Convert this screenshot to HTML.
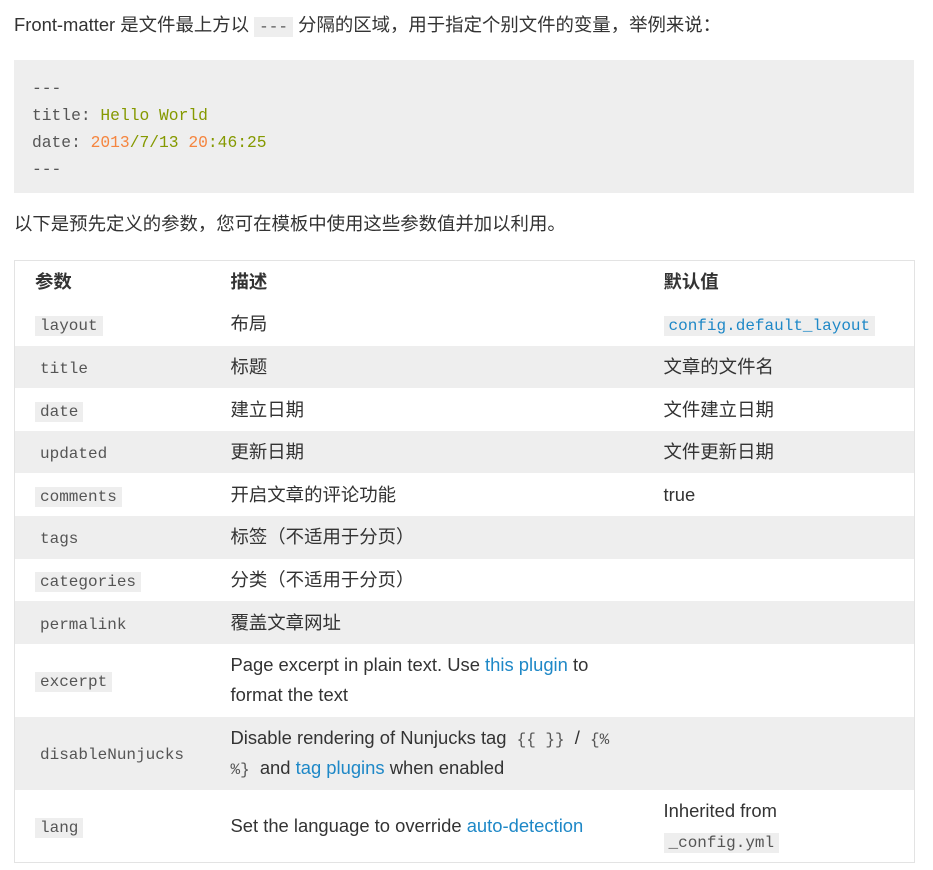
<!DOCTYPE html>
<html><head><meta charset="utf-8"><style>
body{margin:0;background:#fff;color:#333;font-family:"Liberation Sans","Noto Sans CJK SC",sans-serif;font-size:18.4px;}
.p{position:absolute;left:14px;margin:0;line-height:30px;white-space:nowrap;}
code{font-family:"Liberation Mono",monospace;font-size:16px;background:#eee;padding:1px 5px;color:#555;line-height:20px;}
pre{position:absolute;left:14px;top:60px;width:900px;height:133px;margin:0;background:#eee;box-sizing:border-box;padding:15px 18px;font-family:"Liberation Mono",monospace;font-size:16.3px;line-height:27px;color:#555;}
.g{color:#859900}.o{color:#f5853f}
table{position:absolute;left:14px;top:260px;width:900px;border-collapse:collapse;table-layout:fixed;border:1px solid #e3e3e3;}
td,th{text-align:left;padding:0 0 0 14px;line-height:30px;vertical-align:middle;}
td:first-child,th:first-child{padding-left:20px;}
tr{height:42.6px}
tr.t{height:73px}
th{font-weight:bold;}
tr:nth-child(odd) td{background:#eee;}
a{color:#1e88c7;text-decoration:none}
</style></head><body>
<p class="p" style="top:10px">Front-matter 是文件最上方以 <code>---</code> 分隔的区域，用于指定个别文件的变量，举例来说：</p>
<pre>---
title: <span class="g">Hello World</span>
date: <span class="o">2013</span><span class="g">/7/13</span> <span class="o">20</span><span class="g">:46:25</span>
---</pre>
<p class="p" style="top:209px">以下是预先定义的参数，您可在模板中使用这些参数值并加以利用。</p>
<table>
<colgroup><col style="width:202px"><col style="width:433px"><col style="width:265px"></colgroup>
<tr><th>参数</th><th>描述</th><th>默认值</th></tr>
<tr><td><code>layout</code></td><td>布局</td><td><code style="color:#1e88c7">config.default_layout</code></td></tr>
<tr><td><code>title</code></td><td>标题</td><td>文章的文件名</td></tr>
<tr><td><code>date</code></td><td>建立日期</td><td>文件建立日期</td></tr>
<tr><td><code>updated</code></td><td>更新日期</td><td>文件更新日期</td></tr>
<tr><td><code>comments</code></td><td>开启文章的评论功能</td><td>true</td></tr>
<tr><td><code>tags</code></td><td>标签（不适用于分页）</td><td></td></tr>
<tr><td><code>categories</code></td><td>分类（不适用于分页）</td><td></td></tr>
<tr><td><code>permalink</code></td><td>覆盖文章网址</td><td></td></tr>
<tr class="t"><td><code>excerpt</code></td><td>Page excerpt in plain text. Use <a>this plugin</a> to<br>format the text</td><td></td></tr>
<tr class="t"><td><code>disableNunjucks</code></td><td>Disable rendering of Nunjucks tag <code>{{ }}</code> / <code>{%<br>%}</code> and <a>tag plugins</a> when enabled</td><td></td></tr>
<tr class="t"><td><code>lang</code></td><td>Set the language to override <a>auto-detection</a></td><td>Inherited from<br><code>_config.yml</code></td></tr>
</table>
</body></html>
